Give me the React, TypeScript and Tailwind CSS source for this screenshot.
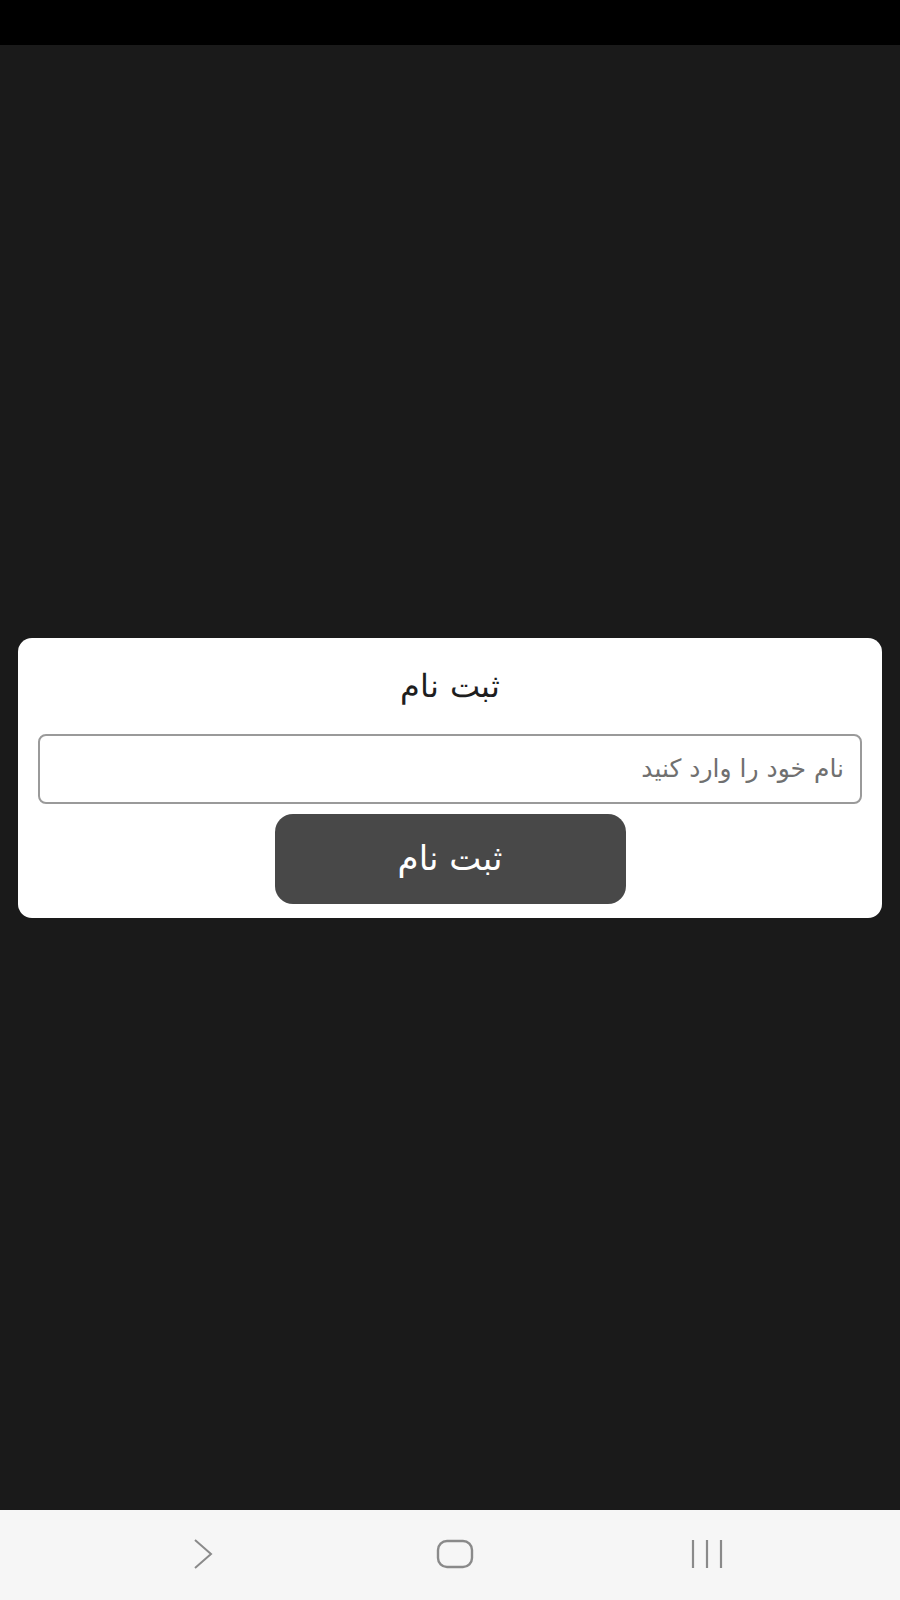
export default function App() {
  return (
    <div
      className="flex h-[1600px] w-full flex-col bg-[#1a1a1a]"
      style={{ fontFamily: '"DejaVu Sans", "Noto Sans", sans-serif' }}
    >
      {/* status bar */}
      <div className="h-[45px] shrink-0 bg-black" />

      {/* content */}
      <div className="flex flex-1 flex-col justify-center px-[18px]">
        <div dir="rtl" className="flex flex-col items-center rounded-[14px] bg-white px-[20px] pb-[14px] pt-[28px]">
          <h1 className="mb-[28px] text-[32px] font-light leading-[40px] text-[#1e1e1e]">ثبت نام</h1>
          <input
            type="text"
            placeholder="نام خود را وارد کنید"
            className="h-[70px] w-full rounded-[8px] border-2 border-[#9a9a9a] bg-white px-[16px] text-[25px] text-[#333] placeholder:text-[#707070] focus:outline-none"
          />
          <button
            type="button"
            className="mt-[10px] h-[90px] w-[351px] rounded-[18px] bg-[#484848] text-[34px] text-white"
          >
            ثبت نام
          </button>
        </div>
      </div>

      {/* navigation bar */}
      <div className="flex h-[90px] shrink-0 items-center gap-[192px] bg-[#f6f6f6] pb-[2px] pl-[173px]">
        <div className="flex w-[60px] justify-center">
          <svg width="22" height="30" viewBox="0 0 22 30" fill="none" stroke="#8a8a8a" strokeWidth="2">
            <path d="M3 1 L19 15 L3 29" />
          </svg>
        </div>
        <div className="flex w-[60px] justify-center">
          <svg width="38" height="30" viewBox="0 0 38 30" fill="none" stroke="#8a8a8a" strokeWidth="2.4">
            <rect x="2" y="2" width="34" height="26" rx="9" />
          </svg>
        </div>
        <div className="flex w-[60px] justify-center">
          <svg width="34" height="30" viewBox="0 0 34 30" fill="none" stroke="#8a8a8a" strokeWidth="2.2">
            <path d="M3 1 V29 M17 1 V29 M31 1 V29" />
          </svg>
        </div>
      </div>
    </div>
  )
}
